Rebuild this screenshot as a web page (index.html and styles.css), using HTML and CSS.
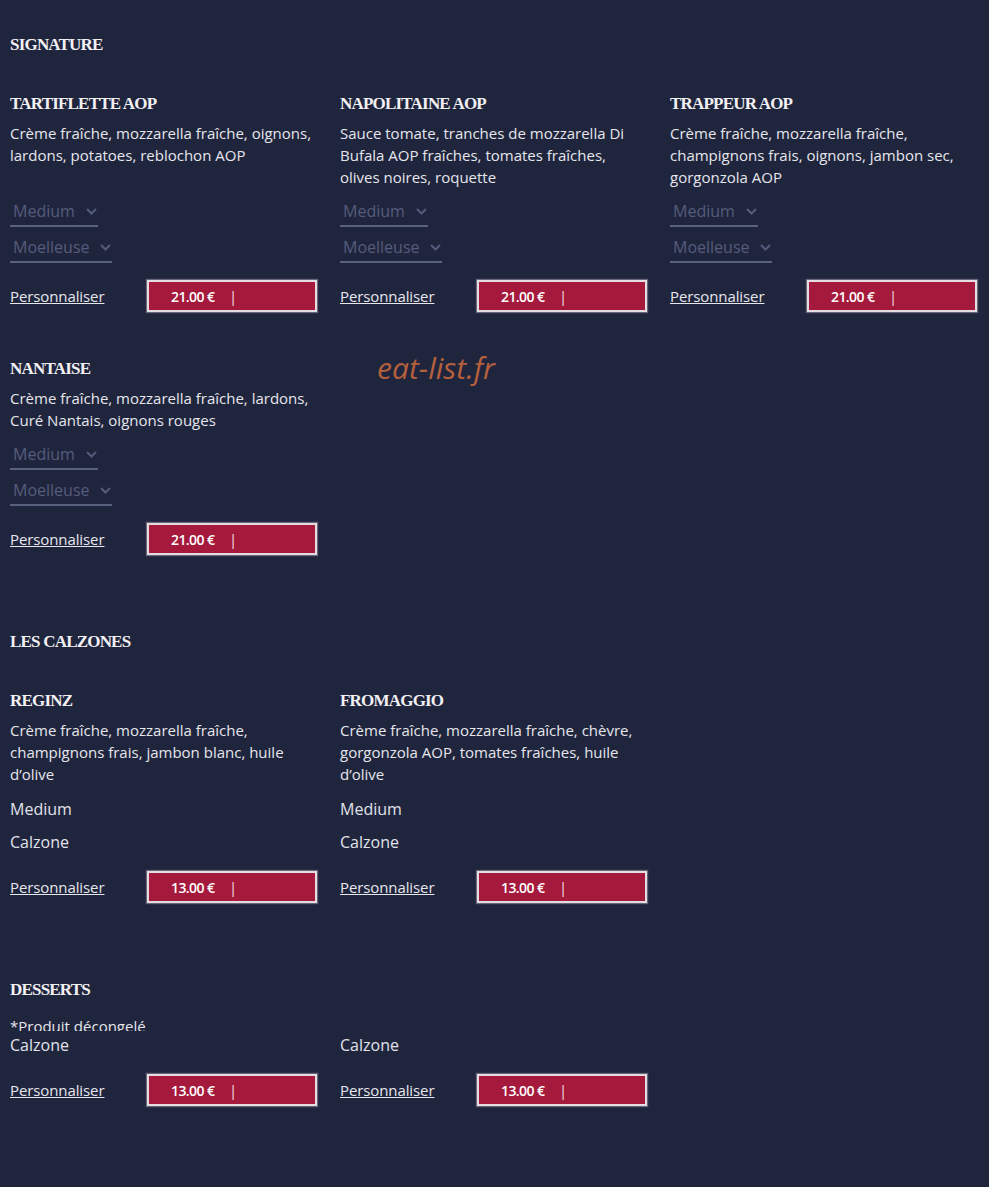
FILE: index.html
```html
<!DOCTYPE html>
<html lang="fr">
<head>
    <meta charset="UTF-8">
    <meta name="viewport" content="width=device-width, initial-scale=1.0">
    <title>Carte - Pizzas</title>
    <link rel="stylesheet" href="styles.css">
</head>
<body>

<div class="watermark">eat-list.fr</div>

<div class="section">
    <h2 class="section-title">SIGNATURE</h2>
    <div class="grid">
        <div class="item">
            <h3>TARTIFLETTE AOP</h3>
            <p class="desc">Crème fraîche, mozzarella fraîche, oignons, lardons, potatoes, reblochon AOP</p>
            <div class="select"><span>Medium</span><svg width="11" height="7" viewBox="0 0 11 7"><path d="M1 1l4.5 4.5L10 1" fill="none" stroke="currentColor" stroke-width="2"/></svg></div>
            <div class="select"><span>Moelleuse</span><svg width="11" height="7" viewBox="0 0 11 7"><path d="M1 1l4.5 4.5L10 1" fill="none" stroke="currentColor" stroke-width="2"/></svg></div>
            <div class="actions">
                <a href="#" class="perso">Personnaliser</a>
                <button type="button" class="price">21.00 € <span class="sep">|</span></button>
            </div>
        </div>
        <div class="item">
            <h3>NAPOLITAINE AOP</h3>
            <p class="desc">Sauce tomate, tranches de mozzarella Di Bufala AOP fraîches, tomates fraîches, olives noires, roquette</p>
            <div class="select"><span>Medium</span><svg width="11" height="7" viewBox="0 0 11 7"><path d="M1 1l4.5 4.5L10 1" fill="none" stroke="currentColor" stroke-width="2"/></svg></div>
            <div class="select"><span>Moelleuse</span><svg width="11" height="7" viewBox="0 0 11 7"><path d="M1 1l4.5 4.5L10 1" fill="none" stroke="currentColor" stroke-width="2"/></svg></div>
            <div class="actions">
                <a href="#" class="perso">Personnaliser</a>
                <button type="button" class="price">21.00 € <span class="sep">|</span></button>
            </div>
        </div>
        <div class="item">
            <h3>TRAPPEUR AOP</h3>
            <p class="desc">Crème fraîche, mozzarella fraîche, champignons frais, oignons, jambon sec, gorgonzola AOP</p>
            <div class="select"><span>Medium</span><svg width="11" height="7" viewBox="0 0 11 7"><path d="M1 1l4.5 4.5L10 1" fill="none" stroke="currentColor" stroke-width="2"/></svg></div>
            <div class="select"><span>Moelleuse</span><svg width="11" height="7" viewBox="0 0 11 7"><path d="M1 1l4.5 4.5L10 1" fill="none" stroke="currentColor" stroke-width="2"/></svg></div>
            <div class="actions">
                <a href="#" class="perso">Personnaliser</a>
                <button type="button" class="price">21.00 € <span class="sep">|</span></button>
            </div>
        </div>
        <div class="item">
            <h3>NANTAISE</h3>
            <p class="desc">Crème fraîche, mozzarella fraîche, lardons, Curé Nantais, oignons rouges</p>
            <div class="select"><span>Medium</span><svg width="11" height="7" viewBox="0 0 11 7"><path d="M1 1l4.5 4.5L10 1" fill="none" stroke="currentColor" stroke-width="2"/></svg></div>
            <div class="select"><span>Moelleuse</span><svg width="11" height="7" viewBox="0 0 11 7"><path d="M1 1l4.5 4.5L10 1" fill="none" stroke="currentColor" stroke-width="2"/></svg></div>
            <div class="actions">
                <a href="#" class="perso">Personnaliser</a>
                <button type="button" class="price">21.00 € <span class="sep">|</span></button>
            </div>
        </div>
    </div>
</div>

<div class="section">
    <h2 class="section-title">LES CALZONES</h2>
    <div class="grid">
        <div class="item">
            <h3>REGINZ</h3>
            <p class="desc">Crème fraîche, mozzarella fraîche, champignons frais, jambon blanc, huile d’olive</p>
            <div class="option option-first">Medium</div>
            <div class="option">Calzone</div>
            <div class="actions">
                <a href="#" class="perso">Personnaliser</a>
                <button type="button" class="price">13.00 € <span class="sep">|</span></button>
            </div>
        </div>
        <div class="item">
            <h3>FROMAGGIO</h3>
            <p class="desc">Crème fraîche, mozzarella fraîche, chèvre, gorgonzola AOP, tomates fraîches, huile d’olive</p>
            <div class="option option-first">Medium</div>
            <div class="option">Calzone</div>
            <div class="actions">
                <a href="#" class="perso">Personnaliser</a>
                <button type="button" class="price">13.00 € <span class="sep">|</span></button>
            </div>
        </div>
    </div>
</div>

<div class="section">
    <h2 class="section-title title-tight">DESSERTS</h2>
    <div class="note">*Produit décongelé</div>
    <div class="grid">
        <div class="item">
            <div class="option option-top">Calzone</div>
            <div class="actions">
                <a href="#" class="perso">Personnaliser</a>
                <button type="button" class="price">13.00 € <span class="sep">|</span></button>
            </div>
        </div>
        <div class="item">
            <div class="option option-top">Calzone</div>
            <div class="actions">
                <a href="#" class="perso">Personnaliser</a>
                <button type="button" class="price">13.00 € <span class="sep">|</span></button>
            </div>
        </div>
    </div>
</div>

</body>
</html>
```

FILE: styles.css
```css
body {
    font-family: "Open Sans", Arial, sans-serif;
    background-color: #20253e;
    color: #e6e6ec;
    margin: 0;
    padding: 35px 10px 0;
    min-height: 1187px;
    box-sizing: border-box;
}
.watermark {
    position: absolute;
    left: 377px;
    top: 347px;
    font-size: 30px;
    font-style: italic;
    color: #b5603c;
}
.section {
    margin-bottom: 77px;
}
.section-title, .item h3 {
    font-family: "Liberation Serif", "Times New Roman", serif;
    font-weight: bold;
    font-size: 17px;
    line-height: 20px;
    letter-spacing: -0.8px;
    color: #f2f0f2;
    margin: 0;
}
.section-title {
    margin-bottom: 39px;
}
.title-tight {
    margin-bottom: 15px;
}
.grid {
    display: grid;
    grid-template-columns: repeat(3, 330px);
    row-gap: 47px;
}
.item {
    display: flex;
    flex-direction: column;
    padding-right: 22px;
}
.item h3 {
    margin-bottom: 8px;
}
.desc {
    flex-grow: 1;
    margin: 0 0 11px;
    font-size: 15px;
    line-height: 22px;
}
.select {
    display: flex;
    align-items: center;
    gap: 11px;
    align-self: flex-start;
    padding: 0 1px 2px 3px;
    line-height: 24px;
    font-size: 16px;
    color: #555c7b;
    border-bottom: 2px solid #5a617f;
    margin-bottom: 8px;
}
.option {
    font-size: 16px;
    line-height: 24px;
    color: #e2e2ea;
    margin-top: 9px;
}
.option-first {
    margin-top: 1px;
}
.option-top {
    margin-top: 2px;
}
.actions {
    display: flex;
    align-items: center;
    margin-top: 9px;
}
.option + .actions {
    margin-top: 17px;
}
.perso {
    flex: 0 0 137px;
    color: #e6e6ec;
    font-size: 15px;
    letter-spacing: -0.1px;
}
.price {
    width: 170px;
    height: 32px;
    box-sizing: border-box;
    text-align: left;
    padding: 0 0 0 22px;
    background-color: #a51a3c;
    border: 2px solid #e6dde2;
    box-shadow: 0 0 1px 1px rgba(235, 226, 230, 0.35);
    color: #fff;
    font-family: "Open Sans", Arial, sans-serif;
    font-weight: 600;
    font-size: 14px;
    letter-spacing: -0.6px;
    cursor: pointer;
}
.sep {
    font-weight: 400;
    color: #f4e8ec;
    margin-left: 12px;
}
.note {
    font-size: 15px;
    line-height: 22px;
    height: 16px;
    overflow: hidden;
}
```
